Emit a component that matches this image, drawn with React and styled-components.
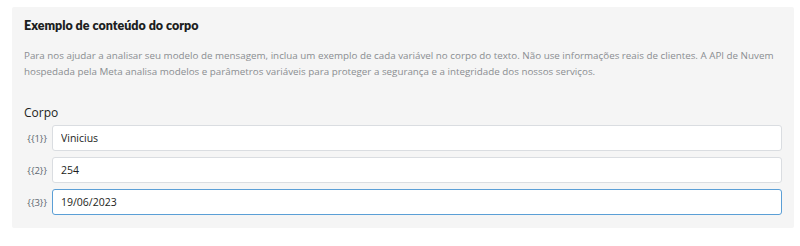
import React from "react";
import styled, { createGlobalStyle } from "styled-components";

const GlobalStyle = createGlobalStyle`
  html, body {
    margin: 0;
    padding: 0;
    background: #ffffff;
  }
  body {
    font-family: "Open Sans", "Noto Sans", sans-serif;
  }
`;

const variables = [
  { key: "1", value: "Vinicius" },
  { key: "2", value: "254" },
  { key: "3", value: "19/06/2023", focused: true },
];

export default function App() {
  return (
    <>
      <GlobalStyle />
      <Page>
        <Panel>
          <Title>Exemplo de conteúdo do corpo</Title>
          <Description>
            Para nos ajudar a analisar seu modelo de mensagem, inclua um exemplo de cada variável no corpo do texto. Não use informações reais de clientes. A API de Nuvem hospedada pela Meta analisa modelos e parâmetros variáveis para proteger a segurança e a integridade dos nossos serviços.
          </Description>
          <SectionLabel>Corpo</SectionLabel>
          <Fields>
            {variables.map((v) => (
              <FieldRow key={v.key}>
                <VarName>{`{{${v.key}}}`}</VarName>
                <Input $focused={v.focused} defaultValue={v.value} />
              </FieldRow>
            ))}
          </Fields>
        </Panel>
      </Page>
    </>
  );
}

const Page = styled.div`
  padding: 7px 6px 18px 12px;
`;

const Panel = styled.div`
  background: #f5f5f5;
  border-radius: 2px;
  padding: 11px 12px 12px 12px;
  box-sizing: border-box;
  width: 782px;
  height: 221px;
`;

const Title = styled.h2`
  margin: 0;
  font-family: "Lato", "Inter", sans-serif;
  font-weight: 800;
  font-size: 12.5px;
  line-height: 16px;
  color: #1c1e21;
`;

const Description = styled.p`
  margin: 14px 0 0 0;
  font-family: "Open Sans", "Noto Sans", sans-serif;
  font-size: 9.8px;
  line-height: 16px;
  color: #8a8d91;
`;

const SectionLabel = styled.div`
  margin-top: 25px;
  font-size: 12px;
  line-height: 16px;
  color: #1c1e21;
`;

const Fields = styled.div`
  margin-top: 4px;
  display: flex;
  flex-direction: column;
  gap: 6px;
`;

const FieldRow = styled.div`
  display: flex;
  align-items: center;
  gap: 5px;
`;

const VarName = styled.span`
  width: 23px;
  text-align: right;
  font-size: 9.5px;
  color: #606770;
`;

const Input = styled.input`
  flex: 1;
  height: 26px;
  box-sizing: border-box;
  border: 1px solid ${(p) => (p.$focused ? "#5b9fd6" : "#dadde1")};
  border-radius: 3px;
  background: #ffffff;
  padding: 0 8px;
  font-family: "Open Sans", "Noto Sans", sans-serif;
  font-size: 10.5px;
  color: #1c1e21;
  outline: none;
`;
